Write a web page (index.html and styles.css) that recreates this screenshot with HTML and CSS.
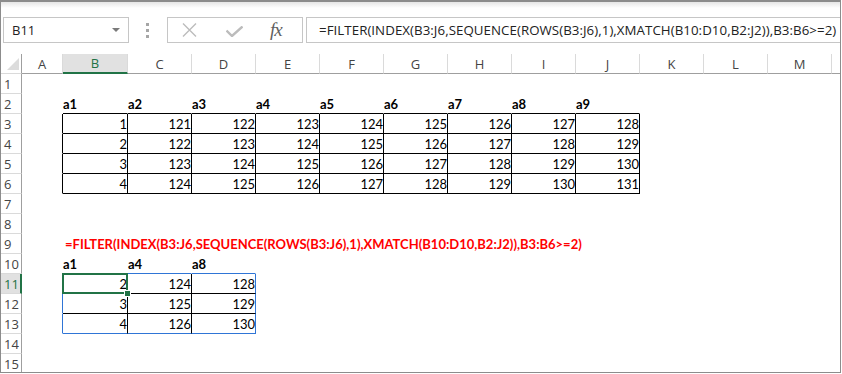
FILE: index.html
```html
<html>
    <head>
        <link rel="stylesheet" href="styles.css">
        <title>FILTER INDEX XMATCH</title>
    </head>
    <body>
        <div class="window">
            <div class="toolbar">
                <div class="namebox">
                    <span>B11</span>
                    <span class="drop"></span>
                </div>
                <svg class="grip" width="4" height="15" viewBox="0 0 4 15">
                    <rect x="0" y="0" width="3" height="3" fill="#a6a6a6"/>
                    <rect x="0" y="6" width="3" height="3" fill="#a6a6a6"/>
                    <rect x="0" y="12" width="3" height="3" fill="#a6a6a6"/>
                </svg>
                <div class="buttons">
                    <svg class="cancel" width="15" height="14" viewBox="0 0 15 14">
                        <path d="M1 0.5 L14 13.5 M14 0.5 L1 13.5" stroke="#bcbcbc" stroke-width="1.4" fill="none"/>
                    </svg>
                    <svg class="enter" width="17" height="11" viewBox="0 0 17 11">
                        <path d="M0.5 4.5 L6 10 L16.5 0.5" stroke="#bcbcbc" stroke-width="2.4" fill="none"/>
                    </svg>
                    <span class="fx">fx</span>
                </div>
                <div class="formula">=FILTER(INDEX(B3:J6,SEQUENCE(ROWS(B3:J6),1),XMATCH(B10:D10,B2:J2)),B3:B6&gt;=2)</div>
            </div>

            <table class="sheet">
                <colgroup>
                    <col style="width:21px">
                    <col style="width:41px">
                    <col style="width:65px">
                    <col style="width:64px"><col style="width:64px"><col style="width:64px">
                    <col style="width:64px"><col style="width:64px"><col style="width:64px">
                    <col style="width:64px"><col style="width:64px"><col style="width:64px">
                    <col style="width:64px"><col style="width:64px">
                    <col style="width:8px">
                </colgroup>
                <tr class="colhead">
                    <th class="corner"><span class="tri"></span></th>
                    <th>A</th><th class="selcol">B</th><th>C</th><th>D</th><th>E</th><th>F</th>
                    <th>G</th><th>H</th><th>I</th><th>J</th><th>K</th><th>L</th><th>M</th><th class="rest"></th>
                </tr>
                <tr><th>1</th><td colspan="14"></td></tr>
                <tr>
                    <th>2</th><td></td>
                    <td class="lbl bb">a1</td><td class="lbl bb">a2</td><td class="lbl bb">a3</td>
                    <td class="lbl bb">a4</td><td class="lbl bb">a5</td><td class="lbl bb">a6</td>
                    <td class="lbl bb">a7</td><td class="lbl bb">a8</td><td class="lbl bb">a9</td>
                    <td colspan="4"></td>
                </tr>
                <tr>
                    <th>3</th><td class="br"></td>
                    <td class="num b">1</td><td class="num b">121</td><td class="num b">122</td>
                    <td class="num b">123</td><td class="num b">124</td><td class="num b">125</td>
                    <td class="num b">126</td><td class="num b">127</td><td class="num b">128</td>
                    <td colspan="4"></td>
                </tr>
                <tr>
                    <th>4</th><td class="br"></td>
                    <td class="num b">2</td><td class="num b">122</td><td class="num b">123</td>
                    <td class="num b">124</td><td class="num b">125</td><td class="num b">126</td>
                    <td class="num b">127</td><td class="num b">128</td><td class="num b">129</td>
                    <td colspan="4"></td>
                </tr>
                <tr>
                    <th>5</th><td class="br"></td>
                    <td class="num b">3</td><td class="num b">123</td><td class="num b">124</td>
                    <td class="num b">125</td><td class="num b">126</td><td class="num b">127</td>
                    <td class="num b">128</td><td class="num b">129</td><td class="num b">130</td>
                    <td colspan="4"></td>
                </tr>
                <tr>
                    <th>6</th><td class="br"></td>
                    <td class="num b">4</td><td class="num b">124</td><td class="num b">125</td>
                    <td class="num b">126</td><td class="num b">127</td><td class="num b">128</td>
                    <td class="num b">129</td><td class="num b">130</td><td class="num b">131</td>
                    <td colspan="4"></td>
                </tr>
                <tr><th>7</th><td colspan="14"></td></tr>
                <tr><th>8</th><td colspan="14"></td></tr>
                <tr>
                    <th>9</th><td></td>
                    <td class="red" colspan="13">=FILTER(INDEX(B3:J6,SEQUENCE(ROWS(B3:J6),1),XMATCH(B10:D10,B2:J2)),B3:B6&gt;=2)</td>
                </tr>
                <tr>
                    <th>10</th><td></td>
                    <td class="lbl sb">a1</td><td class="lbl sb">a4</td><td class="lbl sb">a8</td>
                    <td colspan="10"></td>
                </tr>
                <tr>
                    <th class="selrow">11</th><td class="sr"></td>
                    <td class="num s active">2</td><td class="num s">124</td><td class="num s se">128</td>
                    <td colspan="10"></td>
                </tr>
                <tr>
                    <th>12</th><td class="sr"></td>
                    <td class="num s">3</td><td class="num s">125</td><td class="num s se">129</td>
                    <td colspan="10"></td>
                </tr>
                <tr>
                    <th>13</th><td class="sr"></td>
                    <td class="num s sl">4</td><td class="num s sl">126</td><td class="num s se sl">130</td>
                    <td colspan="10"></td>
                </tr>
                <tr><th>14</th><td colspan="14"></td></tr>
                <tr><th>15</th><td colspan="14"></td></tr>
            </table>
        </div>
    </body>
</html>
```

FILE: styles.css
```css
body{
    margin: 0;
    background-color: white;
    font-family: "Open Sans", sans-serif;
}

.window{
    width: 839px;
    height: 370px;
    border: 1px solid #8c8c8c;
    border-top: 2px solid #8c8c8c;
    overflow: hidden;
}

/* formula bar */

.toolbar{
    display: flex;
    align-items: flex-start;
    height: 52px;
    padding-top: 15px;
    box-sizing: border-box;
    background: linear-gradient(#e6e6e6, white 6px);
}

.namebox{
    display: flex;
    align-items: center;
    justify-content: space-between;
    width: 126px;
    height: 26px;
    margin-left: 2px;
    padding: 0 8px 0 8px;
    box-sizing: border-box;
    border: 1px solid #c6c6c6;
    background-color: white;
    font-size: 13px;
    color: #222;
}

.drop{
    width: 0;
    height: 0;
    border-left: 4px solid transparent;
    border-right: 4px solid transparent;
    border-top: 4px solid #7a7a7a;
}

.grip{
    margin: 6px 17px 0 17px;
}

.buttons{
    display: flex;
    align-items: center;
    width: 136px;
    height: 26px;
    box-sizing: border-box;
    border: 1px solid #c6c6c6;
    background-color: white;
}

.cancel{
    margin-left: 14px;
}

.enter{
    margin-left: 29px;
    margin-top: 2px;
}

.fx{
    margin-left: 27px;
    font-family: "Liberation Serif", serif;
    font-style: italic;
    font-size: 19px;
    color: #5f5f5f;
    letter-spacing: -1px;
}

.formula{
    flex: 1;
    height: 26px;
    margin-left: 3px;
    margin-right: -2px;
    padding-left: 12px;
    box-sizing: border-box;
    border: 1px solid #c6c6c6;
    background-color: white;
    font-size: 13.3px;
    letter-spacing: 0.05px;
    line-height: 24px;
    color: #222;
    white-space: nowrap;
    overflow: hidden;
}

/* grid */

.sheet{
    table-layout: fixed;
    width: 839px;
    border-collapse: separate;
    border-spacing: 0;
}

.sheet th, .sheet td{
    height: 20px;
    padding: 0;
    box-sizing: border-box;
    border-right: 1px solid transparent;
    border-bottom: 1px solid transparent;
    white-space: nowrap;
    overflow: visible;
}

.sheet th{
    font-weight: normal;
    font-size: 13px;
    color: #444;
    text-align: center;
}

.colhead th{
    border-right: 1px solid #dadada;
    border-bottom: 1px solid #9f9f9f;
}

.colhead th.rest{
    border-right: none;
}

.sheet tr th:first-child{
    text-align: left;
    padding-left: 3px;
    border-right: 1px solid #9f9f9f;
    border-bottom: 1px solid #dadada;
}

.colhead th.corner{
    position: relative;
    border-bottom: 1px solid #9f9f9f;
}

.tri{
    position: absolute;
    right: 2px;
    bottom: 3px;
    width: 0;
    height: 0;
    border-left: 12px solid transparent;
    border-bottom: 12px solid #dcdcdc;
}

.colhead th.selcol{
    background-color: #e1e1e1;
    color: #217346;
    border-bottom: 2px solid #217346;
}

.sheet tr th.selrow{
    background-color: #e1e1e1;
    color: #217346;
    border-right: 2px solid #217346;
}

.sheet td{
    font-family: "Lato", sans-serif;
    font-size: 13px;
    color: black;
}

.lbl{
    font-weight: bold;
    padding-left: 3px;
}

.num{
    text-align: right;
    padding-right: 3px;
}

.sheet td.red{
    color: #ff0000;
    font-weight: bold;
    padding-left: 2px;
}

/* data table borders */

.sheet td.bb{
    border-bottom: 1px solid black;
}

.sheet td.br{
    border-right: 1px solid black;
}

.sheet td.b{
    border-right: 1px solid black;
    border-bottom: 1px solid black;
}

/* spill range */

.sheet td.sb{
    border-bottom: 1px solid #2f75d6;
}

.sheet td.sr{
    border-right: 1px solid #2f75d6;
}

.sheet td.s{
    border-right: 1px solid black;
    border-bottom: 1px solid black;
}

.sheet td.se{
    border-right-color: #2f75d6;
}

.sheet td.sl{
    border-bottom-color: #2f75d6;
}

.sheet td.active{
    position: relative;
}

.active::before{
    content: "";
    position: absolute;
    left: -1px;
    top: -1px;
    right: -1px;
    bottom: -1px;
    border: 2px solid #217346;
}

.active::after{
    content: "";
    position: absolute;
    right: -4px;
    bottom: -4px;
    width: 5px;
    height: 5px;
    background-color: #217346;
    border: 1px solid white;
}
```
